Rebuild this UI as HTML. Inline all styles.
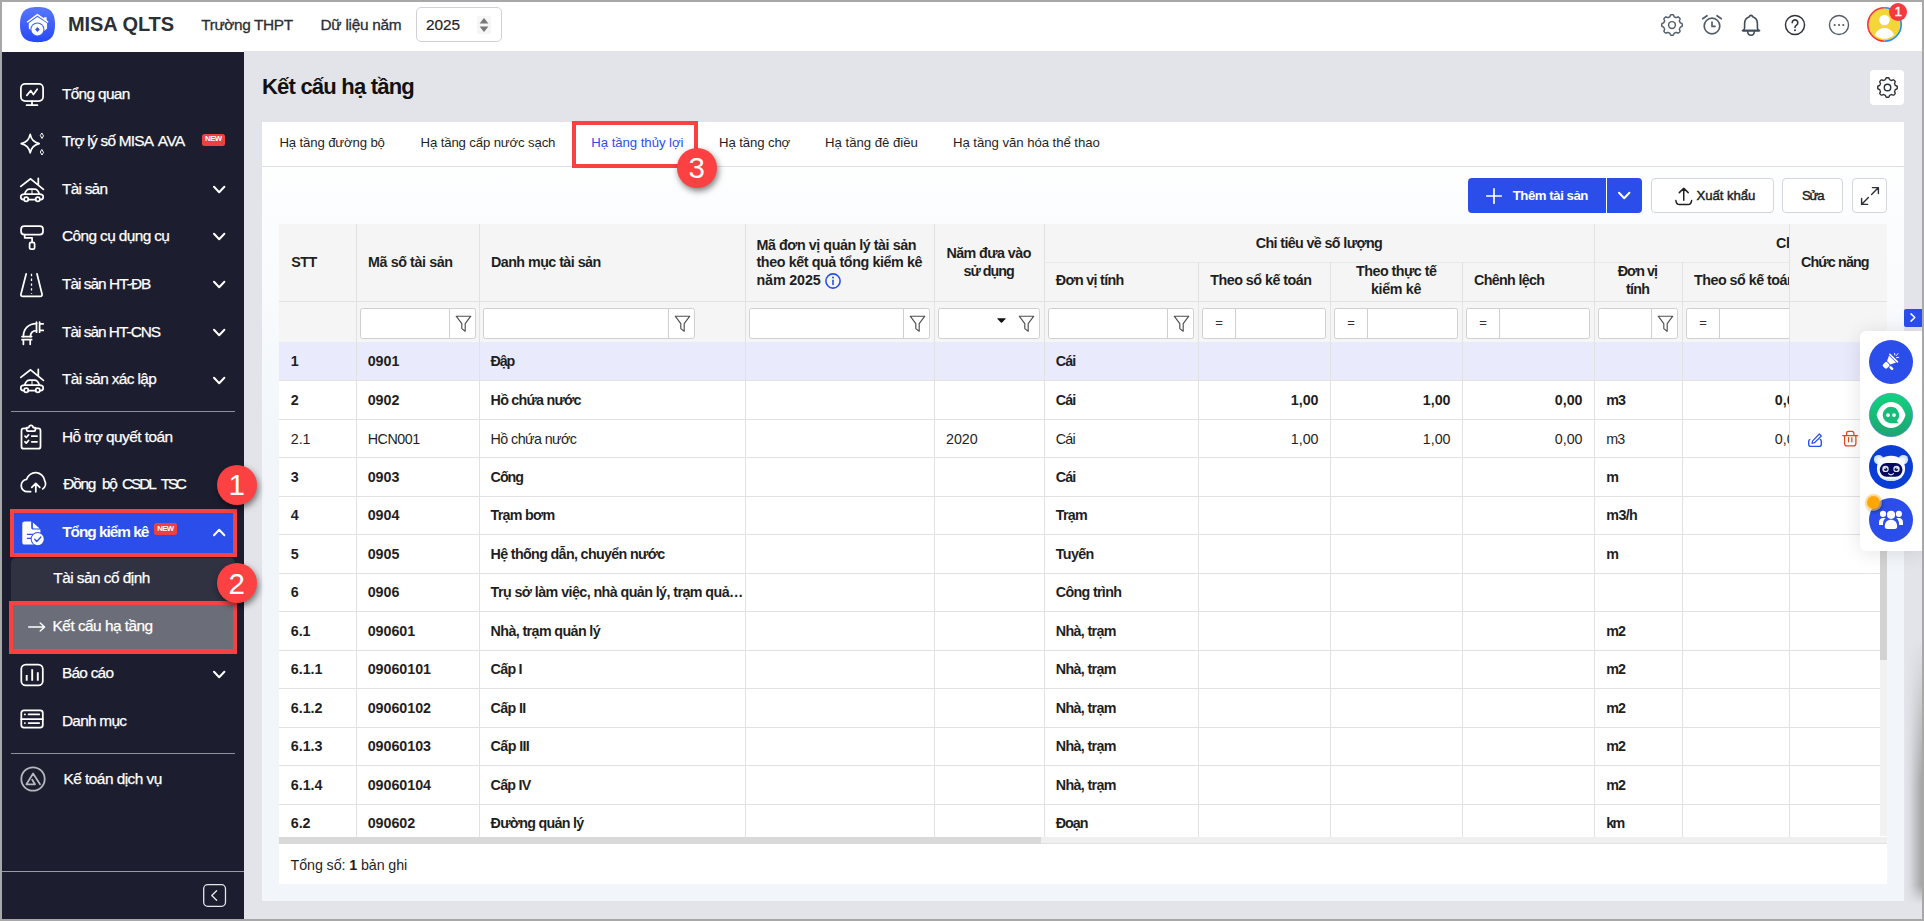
<!DOCTYPE html>
<html lang="vi"><head><meta charset="utf-8"><title>MISA QLTS - Kết cấu hạ tầng</title>
<style>
html,body{margin:0;padding:0}
body{width:1924px;height:921px;overflow:hidden;background:#a7a7a7;font-family:"Liberation Sans",sans-serif;position:relative}
#app{position:absolute;left:0;top:0;width:1924px;height:921px;background:#e3e4e9;overflow:hidden}
#app>*,.abs{position:absolute}
.t{position:absolute;white-space:nowrap}
svg{overflow:visible}
</style></head>
<body>
<div id="app">
<div style="position:absolute;left:0px;top:0px;width:1924px;height:51px;background:#fff;"></div>
<div style="position:absolute;left:0px;top:51px;width:244px;height:1px;background:#fff;"></div>
<svg style="position:absolute;left:20.1px;top:6.8px;" width="35" height="35.2" viewBox="0 0 35 35.200" fill="none"><defs><linearGradient id="lg" x1="0" y1="0" x2="0" y2="1"><stop offset="0" stop-color="#5777ff"/><stop offset="1" stop-color="#2648f6"/></linearGradient></defs>
<path d="M17.5 0C29.500 0 35 4.200 35 17.600S29.500 35.200 17.5 35.200 0 31 0 17.600 5.500 0 17.500 0Z" fill="url(#lg)"/>
<path d="M7.600 14.900 17.400 7.600l10.300 7.300" stroke="#fff" stroke-width="1.500" stroke-linecap="round" stroke-linejoin="round"/>
<path d="M23.900 10.300h2.750v4.200l-2.750-2z" fill="#fff"/>
<path d="M8.800 16.300 17.400 9.900l9.700 6.400v5.300l-2.600 2.100H11.300l-2.500-2.100z" fill="#fff"/>
<circle cx="17.400" cy="22.500" r="7" fill="#3c5cf8"/>
<circle cx="17.400" cy="22.500" r="6" fill="#fff"/>
<path d="M17.400 20.100l2.300 2.400-2.300 2.400-2.300-2.400z" fill="#3456f6"/></svg>
<span class="t" style="left:68.0px;top:10.3px;font-size:20px;line-height:28px;letter-spacing:-0.082px;color:#2b2f36;font-weight:bold;">MISA QLTS</span>
<span class="t" style="left:201.2px;top:13.5px;font-size:15.4px;line-height:22px;letter-spacing:-0.371px;color:#2b2f36;-webkit-text-stroke:0.3px #2b2f36;">Trường THPT</span>
<span class="t" style="left:320.5px;top:13.5px;font-size:15.4px;line-height:22px;letter-spacing:-0.271px;color:#2b2f36;-webkit-text-stroke:0.3px #2b2f36;">Dữ liệu năm</span>
<div style="position:absolute;left:416px;top:7px;width:86px;height:35px;box-sizing:border-box;border:1px solid #cfd2d8;border-radius:5px;background:#fff;"></div>
<span class="t" style="left:426.0px;top:14.3px;font-size:15.4px;line-height:22px;letter-spacing:-0.022px;color:#1f2329;-webkit-text-stroke:0.2px #1f2329;">2025</span>
<svg style="position:absolute;left:477px;top:16px;" width="14" height="18" viewBox="0 0 14 18" fill="none"><rect x="0" y="0" width="14" height="18" fill="#f6f6f6"/><path d="M2.600 7.400 7 1.900l4.400 5.500z" fill="#777"/><path d="M2.600 10.600 7 16.100l4.400-5.500z" fill="#777"/></svg>
<svg style="position:absolute;left:1660.9px;top:13.7px;" width="22" height="22" viewBox="0 0 24 24" fill="none"><path d="M12.00 0.80 12.44 0.81 12.88 0.83 13.31 0.92 13.69 1.30 13.99 2.00 14.23 2.69 14.51 3.11 14.84 3.25 15.18 3.37 15.52 3.50 15.85 3.65 16.18 3.80 16.51 3.94 17.00 3.84 17.67 3.52 18.36 3.24 18.91 3.23 19.27 3.48 19.60 3.78 19.92 4.08 20.22 4.40 20.52 4.73 20.77 5.09 20.76 5.64 20.48 6.33 20.16 7.00 20.06 7.49 20.20 7.82 20.35 8.15 20.50 8.48 20.63 8.82 20.75 9.16 20.89 9.49 21.31 9.77 22.00 10.01 22.70 10.31 23.08 10.69 23.17 11.12 23.19 11.56 23.20 12.00 23.19 12.44 23.17 12.88 23.08 13.31 22.70 13.69 22.00 13.99 21.31 14.23 20.89 14.51 20.75 14.84 20.63 15.18 20.50 15.52 20.35 15.85 20.20 16.18 20.06 16.51 20.16 17.00 20.48 17.67 20.76 18.36 20.77 18.91 20.52 19.27 20.22 19.60 19.92 19.92 19.60 20.22 19.27 20.52 18.91 20.77 18.36 20.76 17.67 20.48 17.00 20.16 16.51 20.06 16.18 20.20 15.85 20.35 15.52 20.50 15.18 20.63 14.84 20.75 14.51 20.89 14.23 21.31 13.99 22.00 13.69 22.70 13.31 23.08 12.88 23.17 12.44 23.19 12.00 23.20 11.56 23.19 11.12 23.17 10.69 23.08 10.31 22.70 10.01 22.00 9.77 21.31 9.49 20.89 9.16 20.75 8.82 20.63 8.48 20.50 8.15 20.35 7.82 20.20 7.49 20.06 7.00 20.16 6.33 20.48 5.64 20.76 5.09 20.77 4.73 20.52 4.40 20.22 4.08 19.92 3.78 19.60 3.48 19.27 3.23 18.91 3.24 18.36 3.52 17.67 3.84 17.00 3.94 16.51 3.80 16.18 3.65 15.85 3.50 15.52 3.37 15.18 3.25 14.84 3.11 14.51 2.69 14.23 2.00 13.99 1.30 13.69 0.92 13.31 0.83 12.88 0.81 12.44 0.80 12.00 0.81 11.56 0.83 11.12 0.92 10.69 1.30 10.31 2.00 10.01 2.69 9.77 3.11 9.49 3.25 9.16 3.37 8.82 3.50 8.48 3.65 8.15 3.80 7.82 3.94 7.49 3.84 7.00 3.52 6.33 3.24 5.64 3.23 5.09 3.48 4.73 3.78 4.40 4.08 4.08 4.40 3.78 4.73 3.48 5.09 3.23 5.64 3.24 6.33 3.52 7.00 3.84 7.49 3.94 7.82 3.80 8.15 3.65 8.48 3.50 8.82 3.37 9.16 3.25 9.49 3.11 9.77 2.69 10.01 2.00 10.31 1.30 10.69 0.92 11.12 0.83 11.56 0.81Z" stroke="#535c69" stroke-width="1.600" stroke-linejoin="round"/><circle cx="12" cy="12" r="3.700" stroke="#535c69" stroke-width="1.600"/></svg>
<svg style="position:absolute;left:1700.5px;top:14px;" width="22" height="22" viewBox="0 0 22 22" fill="none"><circle cx="11" cy="12" r="7.800" stroke="#535c69" stroke-width="1.700"/><path d="M11 8.200v4.200h3" stroke="#535c69" stroke-width="1.700" stroke-linecap="round" stroke-linejoin="round"/><path d="M1.700 4.700 6 1.700M20.300 4.700 16 1.700" stroke="#535c69" stroke-width="1.700" stroke-linecap="round"/></svg>
<svg style="position:absolute;left:1740px;top:13.5px;" width="22" height="23" viewBox="0 0 22 23" fill="none"><path d="M11 1.400c-.9 0-1.500.500-1.700 1.300C6.300 3.700 4.600 6.300 4.600 9.600v4.200c0 1.100-.5 2-1.500 2.800H18.900c-1-.8-1.500-1.700-1.500-2.800V9.600c0-3.300-1.700-5.900-4.700-6.900-.2-.8-.8-1.300-1.700-1.300z" stroke="#3f4a5a" stroke-width="1.600" stroke-linejoin="round"/><path d="M2.500 16.600h17" stroke="#3f4a5a" stroke-width="1.700" stroke-linecap="round"/><path d="M7.700 17.200c0 2.600 1.200 4 3.300 4s3.300-1.400 3.300-4" stroke="#3f4a5a" stroke-width="1.600"/></svg>
<svg style="position:absolute;left:1784px;top:14px;" width="22" height="22" viewBox="0 0 24 24" fill="none"><circle cx="12" cy="12" r="10.400" stroke="#2f343b" stroke-width="1.600"/><path d="M8.900 9.500a3.100 3.100 0 1 1 4.700 2.700c-1 .6-1.600 1.200-1.600 2.500" stroke="#2f343b" stroke-width="1.700" stroke-linecap="round"/><circle cx="12" cy="17.600" r="1.100" fill="#2f343b"/></svg>
<svg style="position:absolute;left:1828px;top:14px;" width="22" height="22" viewBox="0 0 24 24" fill="none"><circle cx="12" cy="12" r="10.400" stroke="#535c69" stroke-width="1.500"/><circle cx="7.300" cy="12" r="1.200" fill="#535c69"/><circle cx="12" cy="12" r="1.200" fill="#535c69"/><circle cx="16.700" cy="12" r="1.200" fill="#535c69"/></svg>
<svg style="position:absolute;left:1867px;top:7.1px;" width="35" height="35" viewBox="0 0 35 35" fill="none"><defs><clipPath id="av"><circle cx="17.5" cy="17.5" r="14.200"/></clipPath></defs>
<path d="M17.5 0a17.5 17.5 0 0 0 0 35z" fill="#f5333d"/><path d="M17.5 0a17.5 17.500 0 0 1 0 35z" fill="#1e8bff"/>
<circle cx="17.5" cy="17.5" r="15.900" fill="#f4d63a"/>
<g clip-path="url(#av)"><circle cx="17.5" cy="13" r="5.200" fill="#fff"/><ellipse cx="17.5" cy="33" rx="10.800" ry="12" fill="#fff"/></g></svg>
<div style="position:absolute;left:1889px;top:3px;width:18px;height:18px;border-radius:50%;background:#f5393f;"></div>
<span class="t" style="left:1894.4px;top:2.4px;font-size:13.5px;line-height:19px;letter-spacing:0px;color:#fff;-webkit-text-stroke:0.4px #fff;">1</span>
<div style="position:absolute;left:0px;top:52px;width:244px;height:869px;background:#1c1d2e;"></div>
<svg style="position:absolute;left:20px;top:82px;" width="24" height="24" viewBox="0 0 24 24" fill="none"><g stroke="#fff" stroke-width="1.750" stroke-linecap="round" stroke-linejoin="round"><rect x="0.900" y="1.800" width="22.200" height="17.200" rx="4.200"/><path d="M12 19v4M6.600 23.200h10.800"/><path d="M6.800 13.400 10.800 8.600 13.400 12.600 17.200 7.200" stroke-width="1.700"/></g></svg>
<span class="t" style="left:62.0px;top:82.6px;font-size:15.4px;line-height:22px;letter-spacing:-0.668px;color:#fff;-webkit-text-stroke:0.25px #fff;">Tổng quan</span>
<svg style="position:absolute;left:20px;top:132px;" width="24" height="24" viewBox="0 0 24 24" fill="none"><g stroke="#fff" stroke-width="1.750" stroke-linecap="round" stroke-linejoin="round"><path d="M10.200 2.400c1.300 5.400 3.400 7.600 9 9.200-5.600 1.600-7.700 3.800-9 9.200-1.300-5.400-3.400-7.600-9-9.200 5.600-1.600 7.700-3.800 9-9.200z"/><path d="M22 1.300l1.500 2.600-1.500 2.600-1.500-2.600zM22 17.800l1.500 2.600-1.500 2.600-1.500-2.600z" stroke-width="1"/></g></svg>
<span class="t" style="left:62.0px;top:130.3px;font-size:15.4px;line-height:22px;letter-spacing:-0.749px;color:#fff;-webkit-text-stroke:0.25px #fff;">Trợ lý số MISA</span>
<span class="t" style="left:157.8px;top:130.3px;font-size:15.4px;line-height:22px;letter-spacing:-0.518px;color:#fff;-webkit-text-stroke:0.25px #fff;">AVA</span>
<div style="position:absolute;left:201.9px;top:133.9px;width:23.2px;height:12.1px;background:#ef403f;border-radius:2.500px;"></div>
<span class="t" style="left:205.1px;top:134.0px;font-size:7.8px;line-height:10px;letter-spacing:-0.599px;color:#fff;font-weight:bold;">NEW</span>
<svg style="position:absolute;left:20px;top:177px;" width="24" height="24" viewBox="0 0 24 24" fill="none"><g stroke="#fff" stroke-width="1.750" stroke-linecap="round" stroke-linejoin="round"><path d="M0.800 9.400 10.600 1.800 23.400 12.400M18.300 1.400V8"/><path d="M4.600 17.200c1-3.200 2.600-5 5-5h4.800c2.400 0 4 1.800 5 5"/><path d="M8.500 22.500h7M3.900 22.500H3.300c-1.500 0-2.500-1-2.500-2.500 0-1.700 1.200-2.800 3.800-2.800h14.800c2.600 0 3.800 1.100 3.800 2.800 0 1.500-1 2.500-2.500 2.500h-.6"/><circle cx="6.200" cy="22.200" r="2.100"/><circle cx="17.800" cy="22.200" r="2.100"/><path d="M12 12.400v4.600" stroke-width="1"/></g></svg>
<span class="t" style="left:62.0px;top:177.8px;font-size:15.4px;line-height:22px;letter-spacing:-0.749px;color:#fff;-webkit-text-stroke:0.25px #fff;">Tài sản</span>
<svg style="position:absolute;left:213px;top:185.1px;" width="12.4" height="9" viewBox="0 0 12.400 9" fill="none"><path d="M1 1.800 6.200 7.200 11.400 1.800" stroke="#fff" stroke-width="2" stroke-linecap="round" stroke-linejoin="round"/></svg>
<svg style="position:absolute;left:20px;top:225px;" width="24" height="26" viewBox="0 0 24 26" fill="none"><g stroke="#fff" stroke-width="1.750" stroke-linecap="round" stroke-linejoin="round"><rect x="1.100" y="1.200" width="21.900" height="8.400" rx="3"/><path d="M4.700 9.600v3.200h7.400v4.600"/><rect x="9.600" y="17.400" width="5" height="6.800" rx="1.500"/></g></svg>
<span class="t" style="left:62.0px;top:225.4px;font-size:15.4px;line-height:22px;letter-spacing:-0.603px;color:#fff;-webkit-text-stroke:0.25px #fff;">Công cụ dụng cụ</span>
<svg style="position:absolute;left:213px;top:232.3px;" width="12.4" height="9" viewBox="0 0 12.400 9" fill="none"><path d="M1 1.800 6.200 7.200 11.400 1.800" stroke="#fff" stroke-width="2" stroke-linecap="round" stroke-linejoin="round"/></svg>
<svg style="position:absolute;left:20px;top:272px;" width="24" height="26" viewBox="0 0 24 26" fill="none"><g stroke="#fff" stroke-width="1.750" stroke-linecap="round" stroke-linejoin="round"><path d="M6.200 1.800 1 22c-.4 1.500.3 2.400 1.700 2.400h17.600c1.400 0 2.100-.9 1.700-2.400L17 1.800"/><path d="M11.500 1.800v20" stroke-dasharray="2.400 2.400" stroke-linecap="butt" stroke-width="1.300"/></g></svg>
<span class="t" style="left:62.0px;top:273.0px;font-size:15.4px;line-height:22px;letter-spacing:-0.965px;color:#fff;-webkit-text-stroke:0.25px #fff;">Tài sản HT-ĐB</span>
<svg style="position:absolute;left:213px;top:280.3px;" width="12.4" height="9" viewBox="0 0 12.400 9" fill="none"><path d="M1 1.800 6.200 7.200 11.400 1.800" stroke="#fff" stroke-width="2" stroke-linecap="round" stroke-linejoin="round"/></svg>
<svg style="position:absolute;left:20px;top:321px;" width="24" height="24" viewBox="0 0 24 24" fill="none"><g stroke="#fff" stroke-width="1.750" stroke-linecap="round" stroke-linejoin="round"><path d="M16.500 2.600C8.500 2.600 3.400 7.800 3.400 15.600M16.500 9.600c-3.800 0-6 2.300-6 6"/><path d="M16.500 1.200v10M19.600 1.200v10M19.600 2.800h3.600M19.600 9.400h3.600M2 15.600h9.600M2 18.700h9.600M3.400 18.700v4.600M10.200 18.700v4.600"/></g></svg>
<span class="t" style="left:62.0px;top:320.6px;font-size:15.4px;line-height:22px;letter-spacing:-0.992px;color:#fff;-webkit-text-stroke:0.25px #fff;">Tài sản HT-CNS</span>
<svg style="position:absolute;left:213px;top:327.9px;" width="12.4" height="9" viewBox="0 0 12.400 9" fill="none"><path d="M1 1.800 6.200 7.200 11.400 1.800" stroke="#fff" stroke-width="2" stroke-linecap="round" stroke-linejoin="round"/></svg>
<svg style="position:absolute;left:20px;top:367.5px;" width="24" height="24" viewBox="0 0 24 24" fill="none"><g stroke="#fff" stroke-width="1.750" stroke-linecap="round" stroke-linejoin="round"><path d="M0.800 9.400 10.600 1.800 23.400 12.400M18.300 1.400V8"/><path d="M4.600 17.200c1-3.200 2.600-5 5-5h4.800c2.400 0 4 1.800 5 5"/><path d="M8.500 22.500h7M3.900 22.500H3.300c-1.500 0-2.500-1-2.500-2.500 0-1.700 1.200-2.800 3.800-2.800h14.800c2.600 0 3.800 1.100 3.800 2.800 0 1.500-1 2.500-2.500 2.500h-.6"/><circle cx="6.200" cy="22.200" r="2.100"/><circle cx="17.800" cy="22.200" r="2.100"/><path d="M12 12.400v4.600" stroke-width="1"/></g></svg>
<span class="t" style="left:62.0px;top:368.2px;font-size:15.4px;line-height:22px;letter-spacing:-0.627px;color:#fff;-webkit-text-stroke:0.25px #fff;">Tài sản xác lập</span>
<svg style="position:absolute;left:213px;top:375.5px;" width="12.4" height="9" viewBox="0 0 12.400 9" fill="none"><path d="M1 1.800 6.200 7.200 11.400 1.800" stroke="#fff" stroke-width="2" stroke-linecap="round" stroke-linejoin="round"/></svg>
<div style="position:absolute;left:11.3px;top:410.7px;width:224px;height:1px;background:#8e909b;"></div>
<svg style="position:absolute;left:20px;top:424px;" width="24" height="26" viewBox="0 0 24 26" fill="none"><g stroke="#fff" stroke-width="1.750" stroke-linecap="round" stroke-linejoin="round"><path d="M6.600 4.400H3.800c-1.400 0-2.300.9-2.300 2.300v15.700c0 1.400.9 2.300 2.300 2.300h14.400c1.400 0 2.300-.9 2.300-2.300V6.700c0-1.400-.9-2.300-2.300-2.300h-2.800"/><path d="M6.600 3.600h2.200c.2-1.400 1-2.200 2.200-2.200s2 .8 2.200 2.200h2.200v2.200c0 .8-.5 1.300-1.300 1.300H7.900c-.8 0-1.300-.5-1.300-1.300z"/><path d="M5 12.200l1.300 1.300 2.300-2.600M11.800 12.200h5.200M5 17.800l1.300 1.300 2.300-2.600M11.800 17.800h5.200"/></g></svg>
<span class="t" style="left:62.0px;top:425.6px;font-size:15.4px;line-height:22px;letter-spacing:-0.53px;color:#fff;-webkit-text-stroke:0.25px #fff;">Hỗ trợ quyết toán</span>
<svg style="position:absolute;left:20px;top:472px;" width="27" height="22" viewBox="0 0 27 22" fill="none"><g stroke="#fff" stroke-width="1.750" stroke-linecap="round" stroke-linejoin="round"><path d="M10.600 19.700H7.400a6.200 6.200 0 0 1-.8-12.350A9.300 9.300 0 0 1 24.700 8.600c1.600 3 .8 6.400-2 8.300"/><path d="M15.800 19.800v-8.200M11.800 15.400l4-4 4 4"/></g></svg>
<span class="t" style="left:63.3px;top:473.0px;font-size:15.4px;line-height:22px;letter-spacing:-1.24px;color:#fff;-webkit-text-stroke:0.25px #fff;">Đồng</span>
<span class="t" style="left:101.9px;top:473.0px;font-size:15.4px;line-height:22px;letter-spacing:-1.125px;color:#fff;-webkit-text-stroke:0.25px #fff;">bộ</span>
<span class="t" style="left:121.9px;top:473.0px;font-size:15.4px;line-height:22px;letter-spacing:-2.062px;color:#fff;-webkit-text-stroke:0.25px #fff;">CSDL</span>
<span class="t" style="left:160.8px;top:473.0px;font-size:15.4px;line-height:22px;letter-spacing:-2.3px;color:#fff;-webkit-text-stroke:0.25px #fff;">TSC</span>
<div style="position:absolute;left:10px;top:509.3px;width:227.2px;height:47.5px;background:#fa4142;"></div>
<div style="position:absolute;left:13.8px;top:512.9px;width:219.5px;height:39.9px;background:#2b4eea;"></div>
<svg style="position:absolute;left:22px;top:520.5px;" width="24" height="25" viewBox="0 0 24 25" fill="none"><path d="M2.600.600H9.200V6.400c0 1.400.800 2.200 2.200 2.200H18.400V23.500H2.600c-1.400 0-2.300-.900-2.300-2.300V2.900c0-1.400.900-2.300 2.300-2.300z" fill="#fff"/><path d="M10.900 1.400 17.700 7.600H12.300c-.900 0-1.400-.500-1.400-1.400z" fill="#fff"/><path d="M4.900 13.400H12M4.900 17.400H12" stroke="#2b4eea" stroke-width="1.400"/><circle cx="15.700" cy="18.100" r="7" fill="#2b4eea"/><circle cx="15.700" cy="18.100" r="6.100" fill="#fff"/><path d="M12.700 18.300l2.100 2.200 4.100-4.500" stroke="#2b4eea" stroke-width="1.300" stroke-linecap="round" stroke-linejoin="round"/></svg>
<span class="t" style="left:62.2px;top:520.8px;font-size:15.4px;line-height:22px;letter-spacing:-1.02px;color:#fff;font-weight:bold;">Tổng kiểm kê</span>
<div style="position:absolute;left:154px;top:523.4px;width:23.2px;height:12.1px;background:#ef403f;border-radius:2.500px;"></div>
<span class="t" style="left:157.2px;top:523.5px;font-size:7.8px;line-height:10px;letter-spacing:-0.599px;color:#fff;font-weight:bold;">NEW</span>
<svg style="position:absolute;left:213px;top:528.3px;" width="12.4" height="9" viewBox="0 0 12.400 9" fill="none"><path d="M1 7.200 6.200 1.800 11.400 7.200" stroke="#fff" stroke-width="2" stroke-linecap="round" stroke-linejoin="round"/></svg>
<div style="position:absolute;left:11.2px;top:558.4px;width:224.2px;height:96px;background:#303141;border-radius:5px 5px 0 0;"></div>
<span class="t" style="left:53.3px;top:567.3px;font-size:15.4px;line-height:22px;letter-spacing:-0.532px;color:#fff;-webkit-text-stroke:0.25px #fff;">Tài sản cố định</span>
<div style="position:absolute;left:9.2px;top:601px;width:227.8px;height:53px;background:#fa4142;"></div>
<div style="position:absolute;left:13.2px;top:604.9px;width:219.8px;height:44.3px;background:#6b6d79;"></div>
<svg style="position:absolute;left:27.5px;top:621px;" width="18" height="12" viewBox="0 0 18 12" fill="none"><path d="M.700 6h15.800M12.200 2l4.400 4-4.400 4" stroke="#fff" stroke-width="1.400" stroke-linecap="round" stroke-linejoin="round"/></svg>
<span class="t" style="left:52.6px;top:615.4px;font-size:15.4px;line-height:22px;letter-spacing:-0.52px;color:#fff;-webkit-text-stroke:0.25px #fff;">Kết cấu hạ tầng</span>
<svg style="position:absolute;left:20px;top:663px;" width="24" height="24" viewBox="0 0 24 24" fill="none"><g stroke="#fff" stroke-width="1.750" stroke-linecap="round" stroke-linejoin="round"><rect x="1.300" y="1.700" width="21.500" height="20.600" rx="4.400"/><path d="M6.700 11.900v5.900M12.200 6.200v11.600M17.800 9.200v8.600" stroke-width="1.900" stroke-linecap="butt"/></g></svg>
<span class="t" style="left:62.0px;top:662.2px;font-size:15.4px;line-height:22px;letter-spacing:-0.75px;color:#fff;-webkit-text-stroke:0.25px #fff;">Báo cáo</span>
<svg style="position:absolute;left:213px;top:669.7px;" width="12.4" height="9" viewBox="0 0 12.400 9" fill="none"><path d="M1 1.800 6.200 7.200 11.400 1.800" stroke="#fff" stroke-width="2" stroke-linecap="round" stroke-linejoin="round"/></svg>
<svg style="position:absolute;left:20px;top:707.1px;" width="24" height="23" viewBox="0 0 24 23" fill="none"><g stroke="#fff" stroke-width="1.750" stroke-linecap="round" stroke-linejoin="round"><rect x="1.300" y="3.300" width="21.500" height="17.400" rx="2.600"/><path d="M1.300 12h21.500M4.800 7.400h.2M8.600 7.400h10.600M4.800 16h.2M8.600 16h10.600"/></g></svg>
<span class="t" style="left:62.0px;top:710.4px;font-size:15.4px;line-height:22px;letter-spacing:-0.742px;color:#fff;-webkit-text-stroke:0.25px #fff;">Danh mục</span>
<div style="position:absolute;left:11.3px;top:752.7px;width:224px;height:1px;background:#8e909b;"></div>
<svg style="position:absolute;left:20.2px;top:766.2px;" width="26" height="26" viewBox="0 0 26 26" fill="none"><circle cx="13" cy="13" r="11.700" stroke="#b7b8bf" stroke-width="1.800"/><path d="M6.400 18.200 13.100 7.500 20 18.200M6.800 18.300h8.200l-2.800-4.600" stroke="#b7b8bf" stroke-width="1.800" stroke-linejoin="round" stroke-linecap="round"/></svg>
<span class="t" style="left:63.5px;top:768.0px;font-size:15.4px;line-height:22px;letter-spacing:-0.519px;color:#fff;-webkit-text-stroke:0.25px #fff;">Kế toán dịch vụ</span>
<div style="position:absolute;left:0px;top:870.5px;width:244px;height:1px;background:#9a9ba6;"></div>
<svg style="position:absolute;left:202.5px;top:883.8px;" width="23.2" height="23" viewBox="0 0 23.200 23" fill="none"><rect x="0.700" y="0.700" width="21.800" height="21.600" rx="4" stroke="#e6e6ea" stroke-width="1.300"/><path d="M13.600 6.800 8.800 11.500l4.800 4.700" stroke="#e6e6ea" stroke-width="1.400" stroke-linecap="round" stroke-linejoin="round"/></svg>
<span class="t" style="left:262.0px;top:70.7px;font-size:22px;line-height:31px;letter-spacing:-0.787px;color:#111;font-weight:bold;">Kết cấu hạ tầng</span>
<div style="position:absolute;left:1870px;top:70px;width:34px;height:34.5px;background:#fff;border-radius:4px;"></div>
<svg style="position:absolute;left:1876.5px;top:76.5px;" width="21" height="21" viewBox="0 0 24 24" fill="none"><path d="M12.00 0.80 12.44 0.81 12.88 0.83 13.31 0.92 13.69 1.30 13.99 2.00 14.23 2.69 14.51 3.11 14.84 3.25 15.18 3.37 15.52 3.50 15.85 3.65 16.18 3.80 16.51 3.94 17.00 3.84 17.67 3.52 18.36 3.24 18.91 3.23 19.27 3.48 19.60 3.78 19.92 4.08 20.22 4.40 20.52 4.73 20.77 5.09 20.76 5.64 20.48 6.33 20.16 7.00 20.06 7.49 20.20 7.82 20.35 8.15 20.50 8.48 20.63 8.82 20.75 9.16 20.89 9.49 21.31 9.77 22.00 10.01 22.70 10.31 23.08 10.69 23.17 11.12 23.19 11.56 23.20 12.00 23.19 12.44 23.17 12.88 23.08 13.31 22.70 13.69 22.00 13.99 21.31 14.23 20.89 14.51 20.75 14.84 20.63 15.18 20.50 15.52 20.35 15.85 20.20 16.18 20.06 16.51 20.16 17.00 20.48 17.67 20.76 18.36 20.77 18.91 20.52 19.27 20.22 19.60 19.92 19.92 19.60 20.22 19.27 20.52 18.91 20.77 18.36 20.76 17.67 20.48 17.00 20.16 16.51 20.06 16.18 20.20 15.85 20.35 15.52 20.50 15.18 20.63 14.84 20.75 14.51 20.89 14.23 21.31 13.99 22.00 13.69 22.70 13.31 23.08 12.88 23.17 12.44 23.19 12.00 23.20 11.56 23.19 11.12 23.17 10.69 23.08 10.31 22.70 10.01 22.00 9.77 21.31 9.49 20.89 9.16 20.75 8.82 20.63 8.48 20.50 8.15 20.35 7.82 20.20 7.49 20.06 7.00 20.16 6.33 20.48 5.64 20.76 5.09 20.77 4.73 20.52 4.40 20.22 4.08 19.92 3.78 19.60 3.48 19.27 3.23 18.91 3.24 18.36 3.52 17.67 3.84 17.00 3.94 16.51 3.80 16.18 3.65 15.85 3.50 15.52 3.37 15.18 3.25 14.84 3.11 14.51 2.69 14.23 2.00 13.99 1.30 13.69 0.92 13.31 0.83 12.88 0.81 12.44 0.80 12.00 0.81 11.56 0.83 11.12 0.92 10.69 1.30 10.31 2.00 10.01 2.69 9.77 3.11 9.49 3.25 9.16 3.37 8.82 3.50 8.48 3.65 8.15 3.80 7.82 3.94 7.49 3.84 7.00 3.52 6.33 3.24 5.64 3.23 5.09 3.48 4.73 3.78 4.40 4.08 4.08 4.40 3.78 4.73 3.48 5.09 3.23 5.64 3.24 6.33 3.52 7.00 3.84 7.49 3.94 7.82 3.80 8.15 3.65 8.48 3.50 8.82 3.37 9.16 3.25 9.49 3.11 9.77 2.69 10.01 2.00 10.31 1.30 10.69 0.92 11.12 0.83 11.56 0.81Z" stroke="#2b2f36" stroke-width="1.600" stroke-linejoin="round"/><circle cx="12" cy="12" r="3.700" stroke="#2b2f36" stroke-width="1.600"/></svg>
<div style="position:absolute;left:262px;top:122px;width:1642px;height:779px;background:linear-gradient(180deg,#ffffff 0%,#fcfdfe 11%,#f2f6fa 42%,#f2f6fa 100%);"></div>
<div style="position:absolute;left:262px;top:122px;width:1642px;height:44.3px;background:#fff;border-bottom:1px solid #dcdfe6;box-sizing:content-box;"></div>
<span class="t" style="left:279.5px;top:133.5px;font-size:13.2px;line-height:18px;letter-spacing:-0.151px;color:#1f1f1f;">Hạ tầng đường bộ</span>
<span class="t" style="left:420.6px;top:133.5px;font-size:13.2px;line-height:18px;letter-spacing:-0.142px;color:#1f1f1f;">Hạ tầng cấp nước sạch</span>
<span class="t" style="left:591.3px;top:133.5px;font-size:13.2px;line-height:18px;letter-spacing:-0.049px;color:#2b4eea;">Hạ tầng thủy lợi</span>
<span class="t" style="left:719.0px;top:133.5px;font-size:13.2px;line-height:18px;letter-spacing:-0.119px;color:#1f1f1f;">Hạ tầng chợ</span>
<span class="t" style="left:825.0px;top:133.5px;font-size:13.2px;line-height:18px;letter-spacing:-0.015px;color:#1f1f1f;">Hạ tầng đê điều</span>
<span class="t" style="left:953.0px;top:133.5px;font-size:13.2px;line-height:18px;letter-spacing:-0.054px;color:#1f1f1f;">Hạ tầng văn hóa thể thao</span>
<div style="position:absolute;left:572px;top:121px;width:126px;height:47px;box-sizing:border-box;border:4px solid #fa4142;"></div>
<div style="position:absolute;left:1468px;top:178px;width:174.2px;height:35px;background:#2b4eea;border-radius:4px;"></div>
<div style="position:absolute;left:1606px;top:178px;width:1.2px;height:35px;background:#fff;"></div>
<svg style="position:absolute;left:1486px;top:187.5px;" width="16" height="16" viewBox="0 0 16 16" fill="none"><path d="M8 .800v14.400M.800 8h14.400" stroke="#fff" stroke-width="1.700" stroke-linecap="round"/></svg>
<span class="t" style="left:1512.7px;top:186.5px;font-size:13.2px;line-height:18px;letter-spacing:-0.445px;color:#fff;font-weight:bold;">Thêm tài sản</span>
<svg style="position:absolute;left:1618.3px;top:191.3px;" width="12.4" height="9" viewBox="0 0 12.400 9" fill="none"><path d="M1 1.800 6.200 7.200 11.400 1.800" stroke="#fff" stroke-width="2" stroke-linecap="round" stroke-linejoin="round"/></svg>
<div style="position:absolute;left:1650.7px;top:178px;width:123.3px;height:35px;box-sizing:border-box;background:#fff;border:1px solid #d3d6dc;border-radius:4px;"></div>
<svg style="position:absolute;left:1674.5px;top:187px;" width="17.5" height="18.5" viewBox="0 0 17.500 18.500" fill="none"><path d="M8.750 13.200V1.200M4.300 5.600 8.750 1.200 13.200 5.600M.900 13.600c.400 2.800 1.600 4 3.600 4h8.500c2 0 3.200-1.200 3.600-4" stroke="#1f1f1f" stroke-width="1.500" stroke-linecap="round" stroke-linejoin="round"/></svg>
<span class="t" style="left:1696.5px;top:186.5px;font-size:13.2px;line-height:18px;letter-spacing:-0.055px;color:#1f1f1f;-webkit-text-stroke:0.45px #1f1f1f;">Xuất khẩu</span>
<div style="position:absolute;left:1782px;top:178px;width:61.2px;height:35px;box-sizing:border-box;background:#fff;border:1px solid #d3d6dc;border-radius:4px;"></div>
<span class="t" style="left:1802.0px;top:186.5px;font-size:13.2px;line-height:18px;letter-spacing:-1.244px;color:#1f1f1f;-webkit-text-stroke:0.45px #1f1f1f;">Sửa</span>
<div style="position:absolute;left:1852.2px;top:178px;width:34.8px;height:35px;box-sizing:border-box;background:#fff;border:1px solid #d3d6dc;border-radius:4px;"></div>
<svg style="position:absolute;left:1859.7px;top:185.5px;" width="20" height="20" viewBox="0 0 20 20" fill="none"><path d="M12.400 1.600h6v6M18.200 1.800 11.600 8.400M7.600 18.400h-6v-6M1.800 18.200 8.400 11.600" stroke="#2b2f36" stroke-width="1.400" stroke-linecap="round" stroke-linejoin="round"/></svg>
<div style="position:absolute;left:279px;top:224px;width:1608px;height:117.5px;background:#f5f5f5;"></div>
<div style="position:absolute;left:279px;top:341.5px;width:1608px;height:502.29999999999995px;background:#fff;"></div>
<div style="position:absolute;left:279px;top:341.5px;width:1608px;height:38.5px;background:#e9ebfd;"></div>
<div style="position:absolute;left:279px;top:380px;width:1601px;height:1px;background:#e2e2e2;"></div>
<div style="position:absolute;left:279px;top:419px;width:1601px;height:1px;background:#e2e2e2;"></div>
<div style="position:absolute;left:279px;top:457px;width:1601px;height:1px;background:#e2e2e2;"></div>
<div style="position:absolute;left:279px;top:496px;width:1601px;height:1px;background:#e2e2e2;"></div>
<div style="position:absolute;left:279px;top:534px;width:1601px;height:1px;background:#e2e2e2;"></div>
<div style="position:absolute;left:279px;top:573px;width:1601px;height:1px;background:#e2e2e2;"></div>
<div style="position:absolute;left:279px;top:611px;width:1601px;height:1px;background:#e2e2e2;"></div>
<div style="position:absolute;left:279px;top:650px;width:1601px;height:1px;background:#e2e2e2;"></div>
<div style="position:absolute;left:279px;top:688px;width:1601px;height:1px;background:#e2e2e2;"></div>
<div style="position:absolute;left:279px;top:727px;width:1601px;height:1px;background:#e2e2e2;"></div>
<div style="position:absolute;left:279px;top:765px;width:1601px;height:1px;background:#e2e2e2;"></div>
<div style="position:absolute;left:279px;top:804px;width:1601px;height:1px;background:#e2e2e2;"></div>
<div style="position:absolute;left:279px;top:300.7px;width:1608px;height:1.2px;background:#e2e2e2;"></div>
<div style="position:absolute;left:1044.4px;top:261.7px;width:745.1999999999998px;height:1.1px;background:#e9e9e9;"></div>
<div style="position:absolute;left:355.9px;top:224px;width:1.1px;height:117.5px;background:#e2e2e2;"></div>
<div style="position:absolute;left:355.9px;top:341.5px;width:1.1px;height:495.5px;background:#e2e2e2;"></div>
<div style="position:absolute;left:479.1px;top:224px;width:1.1px;height:117.5px;background:#e2e2e2;"></div>
<div style="position:absolute;left:479.1px;top:341.5px;width:1.1px;height:495.5px;background:#e2e2e2;"></div>
<div style="position:absolute;left:744.9px;top:224px;width:1.1px;height:117.5px;background:#e2e2e2;"></div>
<div style="position:absolute;left:744.9px;top:341.5px;width:1.1px;height:495.5px;background:#e2e2e2;"></div>
<div style="position:absolute;left:933.8px;top:224px;width:1.1px;height:117.5px;background:#e2e2e2;"></div>
<div style="position:absolute;left:933.8px;top:341.5px;width:1.1px;height:495.5px;background:#e2e2e2;"></div>
<div style="position:absolute;left:1043.9px;top:224px;width:1.1px;height:117.5px;background:#e2e2e2;"></div>
<div style="position:absolute;left:1043.9px;top:341.5px;width:1.1px;height:495.5px;background:#e2e2e2;"></div>
<div style="position:absolute;left:1197.8px;top:262px;width:1.1px;height:79.5px;background:#e2e2e2;"></div>
<div style="position:absolute;left:1197.8px;top:341.5px;width:1.1px;height:495.5px;background:#e2e2e2;"></div>
<div style="position:absolute;left:1329.8px;top:262px;width:1.1px;height:79.5px;background:#e2e2e2;"></div>
<div style="position:absolute;left:1329.8px;top:341.5px;width:1.1px;height:495.5px;background:#e2e2e2;"></div>
<div style="position:absolute;left:1461.9px;top:262px;width:1.1px;height:79.5px;background:#e2e2e2;"></div>
<div style="position:absolute;left:1461.9px;top:341.5px;width:1.1px;height:495.5px;background:#e2e2e2;"></div>
<div style="position:absolute;left:1593.9px;top:224px;width:1.1px;height:117.5px;background:#e2e2e2;"></div>
<div style="position:absolute;left:1593.9px;top:341.5px;width:1.1px;height:495.5px;background:#e2e2e2;"></div>
<div style="position:absolute;left:1681.9px;top:262px;width:1.1px;height:79.5px;background:#e2e2e2;"></div>
<div style="position:absolute;left:1681.9px;top:341.5px;width:1.1px;height:495.5px;background:#e2e2e2;"></div>
<span class="t" style="left:291.2px;top:252.3px;font-size:14.3px;line-height:20px;letter-spacing:-0.506px;color:#1f1f1f;font-weight:bold;">STT</span>
<span class="t" style="left:368.0px;top:252.3px;font-size:14.3px;line-height:20px;letter-spacing:-0.4px;color:#1f1f1f;font-weight:bold;">Mã số tài sản</span>
<span class="t" style="left:491.0px;top:252.3px;font-size:14.3px;line-height:20px;letter-spacing:-0.547px;color:#1f1f1f;font-weight:bold;">Danh mục tài sản</span>
<span class="t" style="left:756.5px;top:234.8px;font-size:14.3px;line-height:20px;letter-spacing:-0.449px;color:#1f1f1f;font-weight:bold;">Mã đơn vị quản lý tài sản</span>
<span class="t" style="left:756.5px;top:252.4px;font-size:14.3px;line-height:20px;letter-spacing:-0.4px;color:#1f1f1f;font-weight:bold;">theo kết quả tổng kiểm kê</span>
<span class="t" style="left:756.5px;top:270.0px;font-size:14.3px;line-height:20px;letter-spacing:-0.142px;color:#1f1f1f;font-weight:bold;">năm 2025</span>
<svg style="position:absolute;left:825px;top:272.6px;" width="16" height="16" viewBox="0 0 16 16" fill="none"><circle cx="8" cy="8" r="7.100" stroke="#2b4eea" stroke-width="1.600"/><path d="M8 7.200v4.300" stroke="#2b4eea" stroke-width="1.600" stroke-linecap="round"/><circle cx="8" cy="4.600" r="1" fill="#2b4eea"/></svg>
<span class="t" style="left:946.4px;top:243.4px;font-size:14.3px;line-height:20px;letter-spacing:-0.562px;color:#1f1f1f;font-weight:bold;">Năm đưa vào</span>
<span class="t" style="left:963.6px;top:261.3px;font-size:14.3px;line-height:20px;letter-spacing:-1.019px;color:#1f1f1f;font-weight:bold;">sử dụng</span>
<span class="t" style="left:1255.8px;top:233.2px;font-size:14.3px;line-height:20px;letter-spacing:-0.627px;color:#1f1f1f;font-weight:bold;">Chỉ tiêu về số lượng</span>
<span class="t" style="left:1055.8px;top:270.0px;font-size:14.3px;line-height:20px;letter-spacing:-0.69px;color:#1f1f1f;font-weight:bold;">Đơn vị tính</span>
<span class="t" style="left:1210.3px;top:270.0px;font-size:14.3px;line-height:20px;letter-spacing:-0.511px;color:#1f1f1f;font-weight:bold;">Theo sổ kế toán</span>
<span class="t" style="left:1356.0px;top:261.3px;font-size:14.3px;line-height:20px;letter-spacing:-0.514px;color:#1f1f1f;font-weight:bold;">Theo thực tế</span>
<span class="t" style="left:1371.0px;top:279.0px;font-size:14.3px;line-height:20px;letter-spacing:-0.344px;color:#1f1f1f;font-weight:bold;">kiểm kê</span>
<span class="t" style="left:1474.0px;top:270.0px;font-size:14.3px;line-height:20px;letter-spacing:-0.675px;color:#1f1f1f;font-weight:bold;">Chênh lệch</span>
<span class="t" style="left:1617.7px;top:261.3px;font-size:14.3px;line-height:20px;letter-spacing:-0.946px;color:#1f1f1f;font-weight:bold;">Đơn vị</span>
<span class="t" style="left:1626.0px;top:279.0px;font-size:14.3px;line-height:20px;letter-spacing:-0.737px;color:#1f1f1f;font-weight:bold;">tính</span>
<span class="t" style="left:1694.0px;top:270.0px;font-size:14.3px;line-height:20px;letter-spacing:-0.511px;color:#1f1f1f;font-weight:bold;">Theo sổ kế toán</span>
<span class="t" style="left:1776.0px;top:233.2px;font-size:14.3px;line-height:20px;letter-spacing:-0.29px;color:#1f1f1f;font-weight:bold;">Chỉ tiêu về giá trị</span>
<div style="position:absolute;left:360px;top:308px;width:116px;height:31px;box-sizing:border-box;background:#fff;border:1px solid #d0d0d0;border-radius:2.500px;"></div>
<div style="position:absolute;left:449px;top:309px;width:1px;height:29px;background:#d0d0d0;"></div>
<svg style="position:absolute;left:454.8px;top:314.6px;" width="17" height="17" viewBox="0 0 17 17" fill="none"><path d="M1.200 1.200h14.600L10.200 8.600v7.600l-3.400-2.600V8.600z" stroke="#4f4f4f" stroke-width="1.150" stroke-linejoin="round"/></svg>
<div style="position:absolute;left:483px;top:308px;width:212px;height:31px;box-sizing:border-box;background:#fff;border:1px solid #d0d0d0;border-radius:2.500px;"></div>
<div style="position:absolute;left:668px;top:309px;width:1px;height:29px;background:#d0d0d0;"></div>
<svg style="position:absolute;left:673.8px;top:314.6px;" width="17" height="17" viewBox="0 0 17 17" fill="none"><path d="M1.200 1.200h14.600L10.200 8.600v7.600l-3.400-2.600V8.600z" stroke="#4f4f4f" stroke-width="1.150" stroke-linejoin="round"/></svg>
<div style="position:absolute;left:749px;top:308px;width:181px;height:31px;box-sizing:border-box;background:#fff;border:1px solid #d0d0d0;border-radius:2.500px;"></div>
<div style="position:absolute;left:903px;top:309px;width:1px;height:29px;background:#d0d0d0;"></div>
<svg style="position:absolute;left:908.8px;top:314.6px;" width="17" height="17" viewBox="0 0 17 17" fill="none"><path d="M1.200 1.200h14.600L10.200 8.600v7.600l-3.400-2.600V8.600z" stroke="#4f4f4f" stroke-width="1.150" stroke-linejoin="round"/></svg>
<div style="position:absolute;left:938px;top:308px;width:102px;height:31px;box-sizing:border-box;background:#fff;border:1px solid #d0d0d0;border-radius:2.500px;"></div>
<svg style="position:absolute;left:1017.6px;top:314.6px;" width="17" height="17" viewBox="0 0 17 17" fill="none"><path d="M1.200 1.200h14.600L10.200 8.600v7.600l-3.400-2.600V8.600z" stroke="#4f4f4f" stroke-width="1.150" stroke-linejoin="round"/></svg>
<svg style="position:absolute;left:996.6px;top:318.4px;" width="9" height="5" viewBox="0 0 9 5" fill="none"><path d="M.900 .200h7.200c.600 0 .800.400.400.900L5.100 4.500c-.400.400-.800.400-1.200 0L.500 1.100C.100.600.300.200.900.200z" fill="#111"/></svg>
<div style="position:absolute;left:1048px;top:308px;width:146px;height:31px;box-sizing:border-box;background:#fff;border:1px solid #d0d0d0;border-radius:2.500px;"></div>
<div style="position:absolute;left:1167px;top:309px;width:1px;height:29px;background:#d0d0d0;"></div>
<svg style="position:absolute;left:1172.8px;top:314.6px;" width="17" height="17" viewBox="0 0 17 17" fill="none"><path d="M1.200 1.200h14.600L10.200 8.600v7.600l-3.400-2.600V8.600z" stroke="#4f4f4f" stroke-width="1.150" stroke-linejoin="round"/></svg>
<div style="position:absolute;left:1202px;top:308px;width:124px;height:31px;box-sizing:border-box;background:#fff;border:1px solid #d0d0d0;border-radius:2.500px;"></div>
<div style="position:absolute;left:1235px;top:309px;width:1px;height:29px;background:#d0d0d0;"></div>
<span class="t" style="left:1215.2px;top:313.8px;font-size:13px;line-height:18px;letter-spacing:0px;color:#333;">=</span>
<div style="position:absolute;left:1334px;top:308px;width:124px;height:31px;box-sizing:border-box;background:#fff;border:1px solid #d0d0d0;border-radius:2.500px;"></div>
<div style="position:absolute;left:1367px;top:309px;width:1px;height:29px;background:#d0d0d0;"></div>
<span class="t" style="left:1347.2px;top:313.8px;font-size:13px;line-height:18px;letter-spacing:0px;color:#333;">=</span>
<div style="position:absolute;left:1466px;top:308px;width:124px;height:31px;box-sizing:border-box;background:#fff;border:1px solid #d0d0d0;border-radius:2.500px;"></div>
<div style="position:absolute;left:1499px;top:309px;width:1px;height:29px;background:#d0d0d0;"></div>
<span class="t" style="left:1479.2px;top:313.8px;font-size:13px;line-height:18px;letter-spacing:0px;color:#333;">=</span>
<div style="position:absolute;left:1598px;top:308px;width:80px;height:31px;box-sizing:border-box;background:#fff;border:1px solid #d0d0d0;border-radius:2.500px;"></div>
<div style="position:absolute;left:1651px;top:309px;width:1px;height:29px;background:#d0d0d0;"></div>
<svg style="position:absolute;left:1656.8px;top:314.6px;" width="17" height="17" viewBox="0 0 17 17" fill="none"><path d="M1.200 1.200h14.600L10.200 8.600v7.600l-3.400-2.600V8.600z" stroke="#4f4f4f" stroke-width="1.150" stroke-linejoin="round"/></svg>
<div style="position:absolute;left:1686px;top:308px;width:124px;height:31px;box-sizing:border-box;background:#fff;border:1px solid #d0d0d0;border-radius:2.500px;"></div>
<div style="position:absolute;left:1719px;top:309px;width:1px;height:29px;background:#d0d0d0;"></div>
<span class="t" style="left:1699.2px;top:313.8px;font-size:13px;line-height:18px;letter-spacing:0px;color:#333;">=</span>
<span class="t" style="left:290.8px;top:351.3px;font-size:14.3px;line-height:20px;letter-spacing:0px;color:#1f1f1f;font-weight:bold;">1</span>
<span class="t" style="left:367.7px;top:351.3px;font-size:14.3px;line-height:20px;letter-spacing:-0.053px;color:#1f1f1f;font-weight:bold;">0901</span>
<span class="t" style="left:490.6px;top:351.3px;font-size:14.3px;line-height:20px;letter-spacing:-1.148px;color:#1f1f1f;font-weight:bold;">Đập</span>
<span class="t" style="left:1055.8px;top:351.3px;font-size:14.3px;line-height:20px;letter-spacing:-0.946px;color:#1f1f1f;font-weight:bold;">Cái</span>
<span class="t" style="left:290.8px;top:389.8px;font-size:14.3px;line-height:20px;letter-spacing:0px;color:#1f1f1f;font-weight:bold;">2</span>
<span class="t" style="left:367.7px;top:389.8px;font-size:14.3px;line-height:20px;letter-spacing:-0.053px;color:#1f1f1f;font-weight:bold;">0902</span>
<span class="t" style="left:490.6px;top:389.8px;font-size:14.3px;line-height:20px;letter-spacing:-0.767px;color:#1f1f1f;font-weight:bold;">Hồ chứa nước</span>
<span class="t" style="left:1055.8px;top:389.8px;font-size:14.3px;line-height:20px;letter-spacing:-0.946px;color:#1f1f1f;font-weight:bold;">Cái</span>
<span class="t" style="left:1290.8px;top:389.8px;font-size:14.3px;line-height:20px;letter-spacing:-0.046px;color:#1f1f1f;font-weight:bold;">1,00</span>
<span class="t" style="left:1422.8px;top:389.8px;font-size:14.3px;line-height:20px;letter-spacing:-0.046px;color:#1f1f1f;font-weight:bold;">1,00</span>
<span class="t" style="left:1554.8px;top:389.8px;font-size:14.3px;line-height:20px;letter-spacing:-0.046px;color:#1f1f1f;font-weight:bold;">0,00</span>
<span class="t" style="left:1606.3px;top:389.8px;font-size:14.3px;line-height:20px;letter-spacing:-1.121px;color:#1f1f1f;font-weight:bold;">m3</span>
<span class="t" style="left:1774.8px;top:389.8px;font-size:14.3px;line-height:20px;letter-spacing:-0.046px;color:#1f1f1f;font-weight:bold;">0,00</span>
<span class="t" style="left:290.8px;top:428.9px;font-size:14.3px;line-height:20px;letter-spacing:-0.05px;color:#1f1f1f;">2.1</span>
<span class="t" style="left:367.7px;top:428.9px;font-size:14.3px;line-height:20px;letter-spacing:-0.458px;color:#1f1f1f;">HCN001</span>
<span class="t" style="left:490.6px;top:428.9px;font-size:14.3px;line-height:20px;letter-spacing:-0.591px;color:#1f1f1f;">Hồ chứa nước</span>
<span class="t" style="left:946.0px;top:428.9px;font-size:14.3px;line-height:20px;letter-spacing:-0.053px;color:#1f1f1f;">2020</span>
<span class="t" style="left:1055.8px;top:428.9px;font-size:14.3px;line-height:20px;letter-spacing:-0.751px;color:#1f1f1f;">Cái</span>
<span class="t" style="left:1290.8px;top:428.9px;font-size:14.3px;line-height:20px;letter-spacing:-0.046px;color:#1f1f1f;">1,00</span>
<span class="t" style="left:1422.8px;top:428.9px;font-size:14.3px;line-height:20px;letter-spacing:-0.046px;color:#1f1f1f;">1,00</span>
<span class="t" style="left:1554.8px;top:428.9px;font-size:14.3px;line-height:20px;letter-spacing:-0.046px;color:#1f1f1f;">0,00</span>
<span class="t" style="left:1606.3px;top:428.9px;font-size:14.3px;line-height:20px;letter-spacing:-0.874px;color:#1f1f1f;">m3</span>
<span class="t" style="left:1774.8px;top:428.9px;font-size:14.3px;line-height:20px;letter-spacing:-0.046px;color:#1f1f1f;">0,00</span>
<span class="t" style="left:290.8px;top:466.8px;font-size:14.3px;line-height:20px;letter-spacing:0px;color:#1f1f1f;font-weight:bold;">3</span>
<span class="t" style="left:367.7px;top:466.8px;font-size:14.3px;line-height:20px;letter-spacing:-0.053px;color:#1f1f1f;font-weight:bold;">0903</span>
<span class="t" style="left:490.6px;top:466.8px;font-size:14.3px;line-height:20px;letter-spacing:-1.035px;color:#1f1f1f;font-weight:bold;">Cống</span>
<span class="t" style="left:1055.8px;top:466.8px;font-size:14.3px;line-height:20px;letter-spacing:-0.946px;color:#1f1f1f;font-weight:bold;">Cái</span>
<span class="t" style="left:1606.3px;top:466.8px;font-size:14.3px;line-height:20px;letter-spacing:0px;color:#1f1f1f;font-weight:bold;">m</span>
<span class="t" style="left:290.8px;top:505.3px;font-size:14.3px;line-height:20px;letter-spacing:0px;color:#1f1f1f;font-weight:bold;">4</span>
<span class="t" style="left:367.7px;top:505.3px;font-size:14.3px;line-height:20px;letter-spacing:-0.053px;color:#1f1f1f;font-weight:bold;">0904</span>
<span class="t" style="left:490.6px;top:505.3px;font-size:14.3px;line-height:20px;letter-spacing:-0.744px;color:#1f1f1f;font-weight:bold;">Trạm bơm</span>
<span class="t" style="left:1055.8px;top:505.3px;font-size:14.3px;line-height:20px;letter-spacing:-0.728px;color:#1f1f1f;font-weight:bold;">Trạm</span>
<span class="t" style="left:1606.3px;top:505.3px;font-size:14.3px;line-height:20px;letter-spacing:-0.628px;color:#1f1f1f;font-weight:bold;">m3/h</span>
<span class="t" style="left:290.8px;top:543.8px;font-size:14.3px;line-height:20px;letter-spacing:0px;color:#1f1f1f;font-weight:bold;">5</span>
<span class="t" style="left:367.7px;top:543.8px;font-size:14.3px;line-height:20px;letter-spacing:-0.053px;color:#1f1f1f;font-weight:bold;">0905</span>
<span class="t" style="left:490.6px;top:543.8px;font-size:14.3px;line-height:20px;letter-spacing:-0.662px;color:#1f1f1f;font-weight:bold;">Hệ thống dẫn, chuyển nước</span>
<span class="t" style="left:1055.8px;top:543.8px;font-size:14.3px;line-height:20px;letter-spacing:-0.63px;color:#1f1f1f;font-weight:bold;">Tuyến</span>
<span class="t" style="left:1606.3px;top:543.8px;font-size:14.3px;line-height:20px;letter-spacing:0px;color:#1f1f1f;font-weight:bold;">m</span>
<span class="t" style="left:290.8px;top:582.3px;font-size:14.3px;line-height:20px;letter-spacing:0px;color:#1f1f1f;font-weight:bold;">6</span>
<span class="t" style="left:367.7px;top:582.3px;font-size:14.3px;line-height:20px;letter-spacing:-0.053px;color:#1f1f1f;font-weight:bold;">0906</span>
<span class="t" style="left:490.6px;top:582.3px;font-size:14.3px;line-height:20px;letter-spacing:-0.579px;color:#1f1f1f;font-weight:bold;">Trụ sở làm việc, nhà quản lý, trạm quả…</span>
<span class="t" style="left:1055.8px;top:582.3px;font-size:14.3px;line-height:20px;letter-spacing:-0.683px;color:#1f1f1f;font-weight:bold;">Công trình</span>
<span class="t" style="left:290.8px;top:620.8px;font-size:14.3px;line-height:20px;letter-spacing:-0.05px;color:#1f1f1f;font-weight:bold;">6.1</span>
<span class="t" style="left:367.7px;top:620.8px;font-size:14.3px;line-height:20px;letter-spacing:-0.048px;color:#1f1f1f;font-weight:bold;">090601</span>
<span class="t" style="left:490.6px;top:620.8px;font-size:14.3px;line-height:20px;letter-spacing:-0.618px;color:#1f1f1f;font-weight:bold;">Nhà, trạm quản lý</span>
<span class="t" style="left:1055.8px;top:620.8px;font-size:14.3px;line-height:20px;letter-spacing:-0.661px;color:#1f1f1f;font-weight:bold;">Nhà, trạm</span>
<span class="t" style="left:1606.3px;top:620.8px;font-size:14.3px;line-height:20px;letter-spacing:-1.121px;color:#1f1f1f;font-weight:bold;">m2</span>
<span class="t" style="left:290.8px;top:659.3px;font-size:14.3px;line-height:20px;letter-spacing:-0.04px;color:#1f1f1f;font-weight:bold;">6.1.1</span>
<span class="t" style="left:367.7px;top:659.3px;font-size:14.3px;line-height:20px;letter-spacing:-0.045px;color:#1f1f1f;font-weight:bold;">09060101</span>
<span class="t" style="left:490.6px;top:659.3px;font-size:14.3px;line-height:20px;letter-spacing:-0.743px;color:#1f1f1f;font-weight:bold;">Cấp I</span>
<span class="t" style="left:1055.8px;top:659.3px;font-size:14.3px;line-height:20px;letter-spacing:-0.661px;color:#1f1f1f;font-weight:bold;">Nhà, trạm</span>
<span class="t" style="left:1606.3px;top:659.3px;font-size:14.3px;line-height:20px;letter-spacing:-1.121px;color:#1f1f1f;font-weight:bold;">m2</span>
<span class="t" style="left:290.8px;top:697.8px;font-size:14.3px;line-height:20px;letter-spacing:-0.04px;color:#1f1f1f;font-weight:bold;">6.1.2</span>
<span class="t" style="left:367.7px;top:697.8px;font-size:14.3px;line-height:20px;letter-spacing:-0.045px;color:#1f1f1f;font-weight:bold;">09060102</span>
<span class="t" style="left:490.6px;top:697.8px;font-size:14.3px;line-height:20px;letter-spacing:-0.662px;color:#1f1f1f;font-weight:bold;">Cấp II</span>
<span class="t" style="left:1055.8px;top:697.8px;font-size:14.3px;line-height:20px;letter-spacing:-0.661px;color:#1f1f1f;font-weight:bold;">Nhà, trạm</span>
<span class="t" style="left:1606.3px;top:697.8px;font-size:14.3px;line-height:20px;letter-spacing:-1.121px;color:#1f1f1f;font-weight:bold;">m2</span>
<span class="t" style="left:290.8px;top:736.3px;font-size:14.3px;line-height:20px;letter-spacing:-0.04px;color:#1f1f1f;font-weight:bold;">6.1.3</span>
<span class="t" style="left:367.7px;top:736.3px;font-size:14.3px;line-height:20px;letter-spacing:-0.045px;color:#1f1f1f;font-weight:bold;">09060103</span>
<span class="t" style="left:490.6px;top:736.3px;font-size:14.3px;line-height:20px;letter-spacing:-0.608px;color:#1f1f1f;font-weight:bold;">Cấp III</span>
<span class="t" style="left:1055.8px;top:736.3px;font-size:14.3px;line-height:20px;letter-spacing:-0.661px;color:#1f1f1f;font-weight:bold;">Nhà, trạm</span>
<span class="t" style="left:1606.3px;top:736.3px;font-size:14.3px;line-height:20px;letter-spacing:-1.121px;color:#1f1f1f;font-weight:bold;">m2</span>
<span class="t" style="left:290.8px;top:774.8px;font-size:14.3px;line-height:20px;letter-spacing:-0.04px;color:#1f1f1f;font-weight:bold;">6.1.4</span>
<span class="t" style="left:367.7px;top:774.8px;font-size:14.3px;line-height:20px;letter-spacing:-0.045px;color:#1f1f1f;font-weight:bold;">09060104</span>
<span class="t" style="left:490.6px;top:774.8px;font-size:14.3px;line-height:20px;letter-spacing:-0.756px;color:#1f1f1f;font-weight:bold;">Cấp IV</span>
<span class="t" style="left:1055.8px;top:774.8px;font-size:14.3px;line-height:20px;letter-spacing:-0.661px;color:#1f1f1f;font-weight:bold;">Nhà, trạm</span>
<span class="t" style="left:1606.3px;top:774.8px;font-size:14.3px;line-height:20px;letter-spacing:-1.121px;color:#1f1f1f;font-weight:bold;">m2</span>
<span class="t" style="left:290.8px;top:813.3px;font-size:14.3px;line-height:20px;letter-spacing:-0.05px;color:#1f1f1f;font-weight:bold;">6.2</span>
<span class="t" style="left:367.7px;top:813.3px;font-size:14.3px;line-height:20px;letter-spacing:-0.048px;color:#1f1f1f;font-weight:bold;">090602</span>
<span class="t" style="left:490.6px;top:813.3px;font-size:14.3px;line-height:20px;letter-spacing:-0.725px;color:#1f1f1f;font-weight:bold;">Đường quản lý</span>
<span class="t" style="left:1055.8px;top:813.3px;font-size:14.3px;line-height:20px;letter-spacing:-1.013px;color:#1f1f1f;font-weight:bold;">Đoạn</span>
<span class="t" style="left:1606.3px;top:813.3px;font-size:14.3px;line-height:20px;letter-spacing:-1.757px;color:#1f1f1f;font-weight:bold;">km</span>
<div style="position:absolute;left:1789.6px;top:224px;width:97.40000000000009px;height:117.5px;background:#f5f5f5;"></div>
<div style="position:absolute;left:1789.6px;top:300.7px;width:97.40000000000009px;height:1.2px;background:#e2e2e2;"></div>
<div style="position:absolute;left:1789.6px;top:341.5px;width:90.40000000000009px;height:495.5px;background:#fff;"></div>
<div style="position:absolute;left:1789.6px;top:341.5px;width:90.40000000000009px;height:38.5px;background:#e9ebfd;"></div>
<div style="position:absolute;left:1789.6px;top:380px;width:90.40000000000009px;height:1px;background:#e2e2e2;"></div>
<div style="position:absolute;left:1789.6px;top:419px;width:90.40000000000009px;height:1px;background:#e2e2e2;"></div>
<div style="position:absolute;left:1789.6px;top:457px;width:90.40000000000009px;height:1px;background:#e2e2e2;"></div>
<div style="position:absolute;left:1789.6px;top:496px;width:90.40000000000009px;height:1px;background:#e2e2e2;"></div>
<div style="position:absolute;left:1789.6px;top:534px;width:90.40000000000009px;height:1px;background:#e2e2e2;"></div>
<div style="position:absolute;left:1789.6px;top:573px;width:90.40000000000009px;height:1px;background:#e2e2e2;"></div>
<div style="position:absolute;left:1789.6px;top:611px;width:90.40000000000009px;height:1px;background:#e2e2e2;"></div>
<div style="position:absolute;left:1789.6px;top:650px;width:90.40000000000009px;height:1px;background:#e2e2e2;"></div>
<div style="position:absolute;left:1789.6px;top:688px;width:90.40000000000009px;height:1px;background:#e2e2e2;"></div>
<div style="position:absolute;left:1789.6px;top:727px;width:90.40000000000009px;height:1px;background:#e2e2e2;"></div>
<div style="position:absolute;left:1789.6px;top:765px;width:90.40000000000009px;height:1px;background:#e2e2e2;"></div>
<div style="position:absolute;left:1789.6px;top:804px;width:90.40000000000009px;height:1px;background:#e2e2e2;"></div>
<div style="position:absolute;left:1789.0px;top:224px;width:1.1px;height:613px;background:#e2e2e2;"></div>
<span class="t" style="left:1801.0px;top:252.3px;font-size:14.3px;line-height:20px;letter-spacing:-0.863px;color:#1f1f1f;font-weight:bold;">Chức năng</span>
<svg style="position:absolute;left:1806px;top:432px;" width="18" height="16" viewBox="0 0 18 16" fill="none"><path d="M3.800 7.600C3 7.800 2.700 8.500 2.700 9.500V12.200C2.700 13.700 3.500 14.400 5 14.400H13C14.500 14.400 15.300 13.700 15.300 12.200V9.500C15.300 8.500 15 7.800 14.300 7.500" stroke="#2b50ea" stroke-width="1.400" stroke-linecap="round"/><path d="M6 11.300 6.600 8.800 13.300 2 15.300 4 8.500 10.700Z" stroke="#2b50ea" stroke-width="1.200" stroke-linejoin="round"/></svg>
<svg style="position:absolute;left:1841.6px;top:430.2px;" width="16.4" height="16.9" viewBox="0 0 17 17.500" fill="none"><path d="M.800 5.800H16.200M4.800 5.600V3.300C4.800 2 5.500 1.300 6.800 1.300H10.300C11.600 1.300 12.300 2 12.300 3.300V5.600M2.700 6V13.900C2.700 15.600 3.600 16.500 5.300 16.500H11.800C13.500 16.500 14.400 15.600 14.400 13.900V6M6.800 8V12.300M10.200 8V12.300" stroke="#e0491f" stroke-width="1.300" stroke-linecap="round" stroke-linejoin="round"/></svg>
<div style="position:absolute;left:1880px;top:341.5px;width:7px;height:494.5px;background:#f1f1f1;"></div>
<div style="position:absolute;left:1880px;top:341.5px;width:7px;height:318.1px;background:#d2d2d2;"></div>
<div style="position:absolute;left:279px;top:837px;width:1608px;height:7.4px;background:#efefef;border-bottom:1px solid #e2e2e2;box-sizing:border-box;"></div>
<div style="position:absolute;left:279px;top:837px;width:762px;height:7px;background:#d9d9d9;"></div>
<div style="position:absolute;left:279px;top:844.4px;width:1608px;height:39.6px;background:#fff;"></div>
<span class="t" style="left:290.6px;top:855.2px;font-size:14.3px;line-height:20px;letter-spacing:-0.106px;color:#1f1f1f;">Tổng số:</span>
<span class="t" style="left:349.3px;top:855.2px;font-size:14.3px;line-height:20px;letter-spacing:0px;color:#1f1f1f;font-weight:bold;">1</span>
<span class="t" style="left:361.0px;top:855.2px;font-size:14.3px;line-height:20px;letter-spacing:-0.12px;color:#1f1f1f;">bản ghi</span>
<div style="position:absolute;left:216.9px;top:464.9px;width:40.2px;height:40.2px;border-radius:50%;background:#fb4142;box-shadow:1.500px 3px 6px rgba(0,0,0,.5);"></div>
<span class="t" style="left:228.5px;top:468.4px;font-size:29.5px;line-height:34px;letter-spacing:0px;color:#fff;">1</span>
<div style="position:absolute;left:216.9px;top:563.1999999999999px;width:40.2px;height:40.2px;border-radius:50%;background:#fb4142;box-shadow:1.500px 3px 6px rgba(0,0,0,.5);"></div>
<span class="t" style="left:228.5px;top:566.7px;font-size:29.5px;line-height:34px;letter-spacing:0px;color:#fff;">2</span>
<div style="position:absolute;left:676.9px;top:147.9px;width:40.2px;height:40.2px;border-radius:50%;background:#fb4142;box-shadow:1.500px 3px 6px rgba(0,0,0,.5);"></div>
<span class="t" style="left:688.5px;top:151.4px;font-size:29.5px;line-height:34px;letter-spacing:0px;color:#fff;">3</span>
<div style="position:absolute;left:1904.2px;top:309.1px;width:17.8px;height:18px;background:#2b4eea;border-radius:2px 0 0 2px;"></div>
<svg style="position:absolute;left:1909.8px;top:313.4px;" width="6" height="9" viewBox="0 0 6 9" fill="none"><path d="M1 .900 4.800 4.500 1 8.100" stroke="#fff" stroke-width="1.500" stroke-linecap="round" stroke-linejoin="round"/></svg>
<div style="position:absolute;left:1860.4px;top:331.2px;width:61.6px;height:219.8px;background:#fff;border-radius:6px 0 0 6px;box-shadow:0 2px 20px rgba(0,0,0,.11);"></div>
<div style="position:absolute;left:1869px;top:339.9px;width:44px;height:44px;border-radius:50%;background:#2b4eea;"></div>
<svg style="position:absolute;left:1869px;top:339.9px;" width="44" height="44" viewBox="0 0 44 44" fill="none"><g transform="translate(22 22) rotate(-45)" fill="#fff"><rect x="3.900" y="-7.100" width="1.500" height="12.300" rx=".700"/><path d="M3.200 -5.900V4L-2.200 1.500v-5z"/><rect x="-8.700" y="-3.900" width="5.800" height="5.500" rx="1.400"/><rect x="-5.400" y="2.300" width="2.600" height="4.600" rx="1.200"/><path d="M7.700 -2.200 8.600 -3.600M8.400 -.800 10.900 -1M6.900 .800 8.800 2.200" stroke="#fff" stroke-width=".900" stroke-linecap="round"/></g></svg>
<svg style="position:absolute;left:1869px;top:392.9px;" width="44" height="44" viewBox="0 0 44 44" fill="none"><defs><linearGradient id="gg" x1="0" y1="0" x2="0" y2="1"><stop offset="0" stop-color="#0fd47e"/><stop offset="1" stop-color="#1fa372"/></linearGradient></defs><circle cx="22" cy="22" r="21.700" fill="url(#gg)" stroke="#3f6fe0" stroke-width=".500"/><path d="M7.600 22.100C10 14 15 9.100 22 9.100S34 14 36.500 22.100C34 30.200 29 35.100 22 35.100S10 30.200 7.600 22.100z" fill="#fff"/><path d="M22 13.700a8.300 8.300 0 1 0 0 16.600h7.800l-2.100-2.500A8.300 8.300 0 0 0 22 13.700z" fill="#16bd7a"/><circle cx="19" cy="22.100" r="1.900" fill="#fff"/><circle cx="25" cy="22.100" r="1.900" fill="#fff"/></svg>
<svg style="position:absolute;left:1869px;top:445px;" width="44" height="44" viewBox="0 0 44 44" fill="none"><circle cx="22" cy="22" r="22" fill="#0a3dd6"/><circle cx="9.600" cy="14.600" r="4.700" fill="#cfe4ff"/><circle cx="34.400" cy="14.600" r="4.700" fill="#cfe4ff"/><circle cx="10.600" cy="15.400" r="3" fill="#eef6ff"/><circle cx="33.400" cy="15.400" r="3" fill="#eef6ff"/><path d="M22 10.800c-9 0-14.100 5-14.100 12.600 0 7 5.100 12.400 14.100 12.400s14.100-5.400 14.100-12.400c0-7.600-5.100-12.600-14.100-12.600z" fill="#f7fbff"/><path d="M10 31.500c3 2.800 7 4.300 12 4.300s9-1.500 12-4.300c-3 1.700-7 2.500-12 2.500s-9-.800-12-2.500z" fill="#d4e6ff"/><rect x="10.700" y="17.900" width="22.800" height="13.800" rx="6.900" fill="#060a5e"/><circle cx="16.500" cy="23.900" r="3.200" fill="#dfe6f5"/><circle cx="27.500" cy="23.900" r="3.200" fill="#dfe6f5"/><circle cx="16.700" cy="24.300" r="1.700" fill="#1a1f4d"/><circle cx="27.300" cy="24.300" r="1.700" fill="#1a1f4d"/><circle cx="16" cy="23.200" r=".800" fill="#fff"/><circle cx="28" cy="23.200" r=".800" fill="#fff"/><path d="M19.600 28.700c1.400 1.300 3.400 1.300 4.800 0" stroke="#e8f0ff" stroke-width="1.100" stroke-linecap="round"/></svg>
<svg style="position:absolute;left:1869px;top:498px;" width="44" height="44" viewBox="0 0 44 44" fill="none"><circle cx="22" cy="22" r="22" fill="#2b4eea"/><circle cx="14" cy="15.900" r="3.050" fill="#fff"/><circle cx="29.900" cy="15.900" r="3.050" fill="#fff"/><path d="M10 27.100v-2.800c0-2.600 1.600-4.200 4.200-4.200h2.600c-1.800 1.300-2.800 3.200-2.800 5.600v1.400zM34 27.100v-2.800c0-2.600-1.600-4.200-4.200-4.200h-2.600c1.800 1.300 2.800 3.200 2.800 5.600v1.400z" fill="#fff"/><circle cx="22.050" cy="16.800" r="4.100" fill="#fff"/><path d="M15.800 28.600c0-4.200 2.400-6.800 6.200-6.800s6.200 2.600 6.200 6.800c0 1.500-.800 2.300-2.300 2.300h-7.800c-1.500 0-2.300-.800-2.300-2.300z" fill="#fff"/></svg>
<div style="position:absolute;left:1864.8px;top:493.8px;width:17.4px;height:17.4px;border-radius:50%;background:rgba(255,190,70,.55);box-shadow:1px 1.500px 2.500px rgba(0,0,0,.25);"></div>
<div style="position:absolute;left:1867px;top:496px;width:13px;height:13px;border-radius:50%;background:#ffa700;"></div>
<div style="position:absolute;left:1905px;top:640px;width:17px;height:264px;background:linear-gradient(to right,rgba(100,100,100,0) 0%,rgba(100,100,100,.08) 30%,rgba(100,100,100,.5) 100%);-webkit-mask-image:linear-gradient(to bottom,transparent 0%,#000 55%,#000 93%,transparent 100%);mask-image:linear-gradient(to bottom,transparent 0%,#000 55%,#000 93%,transparent 100%);"></div>
<div style="position:absolute;left:0px;top:0px;width:1924px;height:1.8px;background:#a8a8a8;"></div>
<div style="position:absolute;left:0px;top:0px;width:1.9px;height:921px;background:#a8a8a8;"></div>
<div style="position:absolute;left:1922px;top:0px;width:2px;height:921px;background:#a8a8a8;"></div>
<div style="position:absolute;left:0px;top:918.5px;width:1924px;height:2.5px;background:#a8a8a8;"></div>
</div>
</body></html>
